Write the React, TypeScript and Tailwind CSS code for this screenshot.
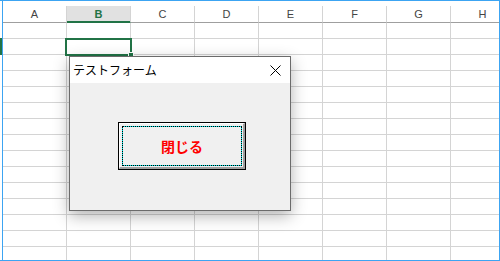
const columns = ['A', 'B', 'C', 'D', 'E', 'F', 'G', 'H'];
const rowCount = 15;

export default function App() {
  return (
    <div className="relative flex w-[500px] h-[261px] overflow-hidden bg-white border-y border-r border-[#3ca4f2] font-['Liberation_Sans',sans-serif]">
      {/* row header stub */}
      <div className="flex flex-col w-[2px] shrink-0">
        <div className="h-[37px] bg-white" />
        <div className="h-[17px] bg-[#217346]" />
      </div>
      <div className="w-px shrink-0 bg-[#3ca4f2]" />

      {/* sheet grid */}
      <div className="flex flex-col flex-1 overflow-hidden">
        <div className="h-[5px] shrink-0" />
        <div className="flex shrink-0">
          {columns.map((col) => (
            <div
              key={col}
              className={
                col === 'B'
                  ? 'w-[64px] h-[17px] shrink-0 flex items-center justify-center border-r border-[#d4d4d4] border-b border-b-[#217346] bg-[#e1e1e1] shadow-[inset_0_-1px_0_#217346] text-[11px] font-bold text-[#217346]'
                  : 'w-[64px] h-[17px] shrink-0 flex items-center justify-center border-r border-[#d4d4d4] border-b border-b-[#9f9f9f] text-[11px] text-[#444]'
              }
            >
              {col}
            </div>
          ))}
        </div>
        {Array.from({ length: rowCount }).map((_, r) => (
          <div key={r} className="flex shrink-0">
            {columns.map((col) => (
              <div key={col} className="w-[64px] h-[16px] shrink-0 border-r border-b border-[#d4d4d4]" />
            ))}
          </div>
        ))}
      </div>

      {/* active cell B2 */}
      <div className="absolute left-[65px] top-[37px] w-[67px] h-[18px] border-2 border-[#217346]">
        <div className="absolute -right-[4px] -bottom-[4px] w-[6px] h-[6px] bg-[#217346] border border-white" />
      </div>

      {/* user form */}
      <div className="absolute left-[69px] top-[55px] w-[222px] h-[155px] flex flex-col border border-[#6b6b6b] bg-[#f0f0f0] shadow-[0_5px_15px_rgba(0,0,0,0.3)] font-['Noto_Sans_CJK_JP',sans-serif]">
        <div className="h-[26px] shrink-0 flex items-center justify-between bg-white pl-[3px] pr-[9px]">
          <span className="text-[12px] leading-none text-black">テストフォーム</span>
          <svg width="11" height="11" viewBox="0 0 11 11" className="mt-px">
            <path d="M0.5 0.5L10.5 10.5M10.5 0.5L0.5 10.5" stroke="#000" strokeWidth="1" />
          </svg>
        </div>
        <div className="flex-1 pt-[39px] pl-[48px]">
          <div className="w-[128px] h-[48px] border border-black">
            <div className="h-full border-t border-l border-white border-r-2 border-b-2 border-r-[#a0a0a0] border-b-[#a0a0a0] bg-[#f0f0f0] pt-[2px] pl-[2px] pr-px pb-px">
              <div className="h-full border border-dotted border-black bg-[#00e5e5]">
                <div className="h-full flex items-center justify-center bg-[#f0f0f0] text-[14px] font-bold text-[#ff0000]">
                  閉じる
                </div>
              </div>
            </div>
          </div>
        </div>
      </div>
    </div>
  );
}
